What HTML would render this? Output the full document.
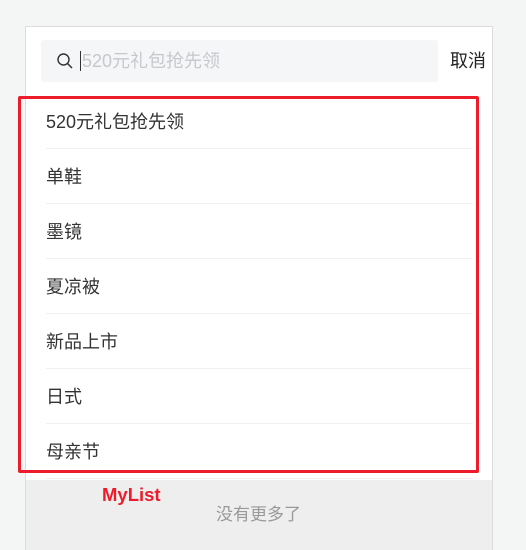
<!DOCTYPE html>
<html style="width:526px;height:550px;overflow:hidden"><head><meta charset="utf-8"><style>
*{margin:0;padding:0;box-sizing:border-box}
body{width:526px;height:550px;background:#f4f5f5;position:relative;overflow:hidden;font-family:"Liberation Sans","Noto Sans CJK SC",sans-serif}
.panel{position:absolute;left:25px;top:26px;width:468px;height:530px;background:#fff;border:1px solid #dcdcdc}
.search{position:absolute;left:41px;top:40px;width:397px;height:42px;background:#f5f6f8;border-radius:3px}
.ph{position:absolute;left:82px;top:50px;font-size:18px;color:#c6c8cc;line-height:22px}
.caret{position:absolute;left:80px;top:51px;width:1px;height:20px;background:#333}
.cancel{position:absolute;left:450px;top:50px;font-size:18px;color:#222;line-height:22px}
.item{position:absolute;left:46px;width:427px;height:55px;border-bottom:1px solid #f0f0f0;font-size:18px;color:#333;line-height:57px}
.gray{position:absolute;left:26px;top:480px;width:466px;height:70px;background:#eeeeee}
.red{position:absolute;left:18px;top:96px;width:461px;height:377px;border:3px solid #ec1c2a;border-radius:2px}
.my{position:absolute;left:102px;top:484px;font-size:18.5px;font-weight:bold;color:#ec1c2a}
.more{position:absolute;left:216px;top:500px;font-size:17px;color:#999}
</style></head><body>
<div class="panel"></div>
<div class="search"></div>
<svg style="position:absolute;left:56px;top:52px" width="18" height="18" viewBox="0 0 18 18"><circle cx="7.5" cy="7.5" r="5.5" fill="none" stroke="#333" stroke-width="1.4"/><line x1="11.5" y1="11.5" x2="16" y2="16" stroke="#333" stroke-width="1.5"/></svg>
<div class="caret"></div>
<div class="ph">520元礼包抢先领</div>
<div class="cancel">取消</div>
<div class="item" style="top:94px">520元礼包抢先领</div>
<div class="item" style="top:149px">单鞋</div>
<div class="item" style="top:204px">墨镜</div>
<div class="item" style="top:259px">夏凉被</div>
<div class="item" style="top:314px">新品上市</div>
<div class="item" style="top:369px">日式</div>
<div class="item" style="top:424px">母亲节</div>
<div class="gray"></div>
<div class="red"></div>
<div class="my">MyList</div>
<div class="more">没有更多了</div>
</body></html>
